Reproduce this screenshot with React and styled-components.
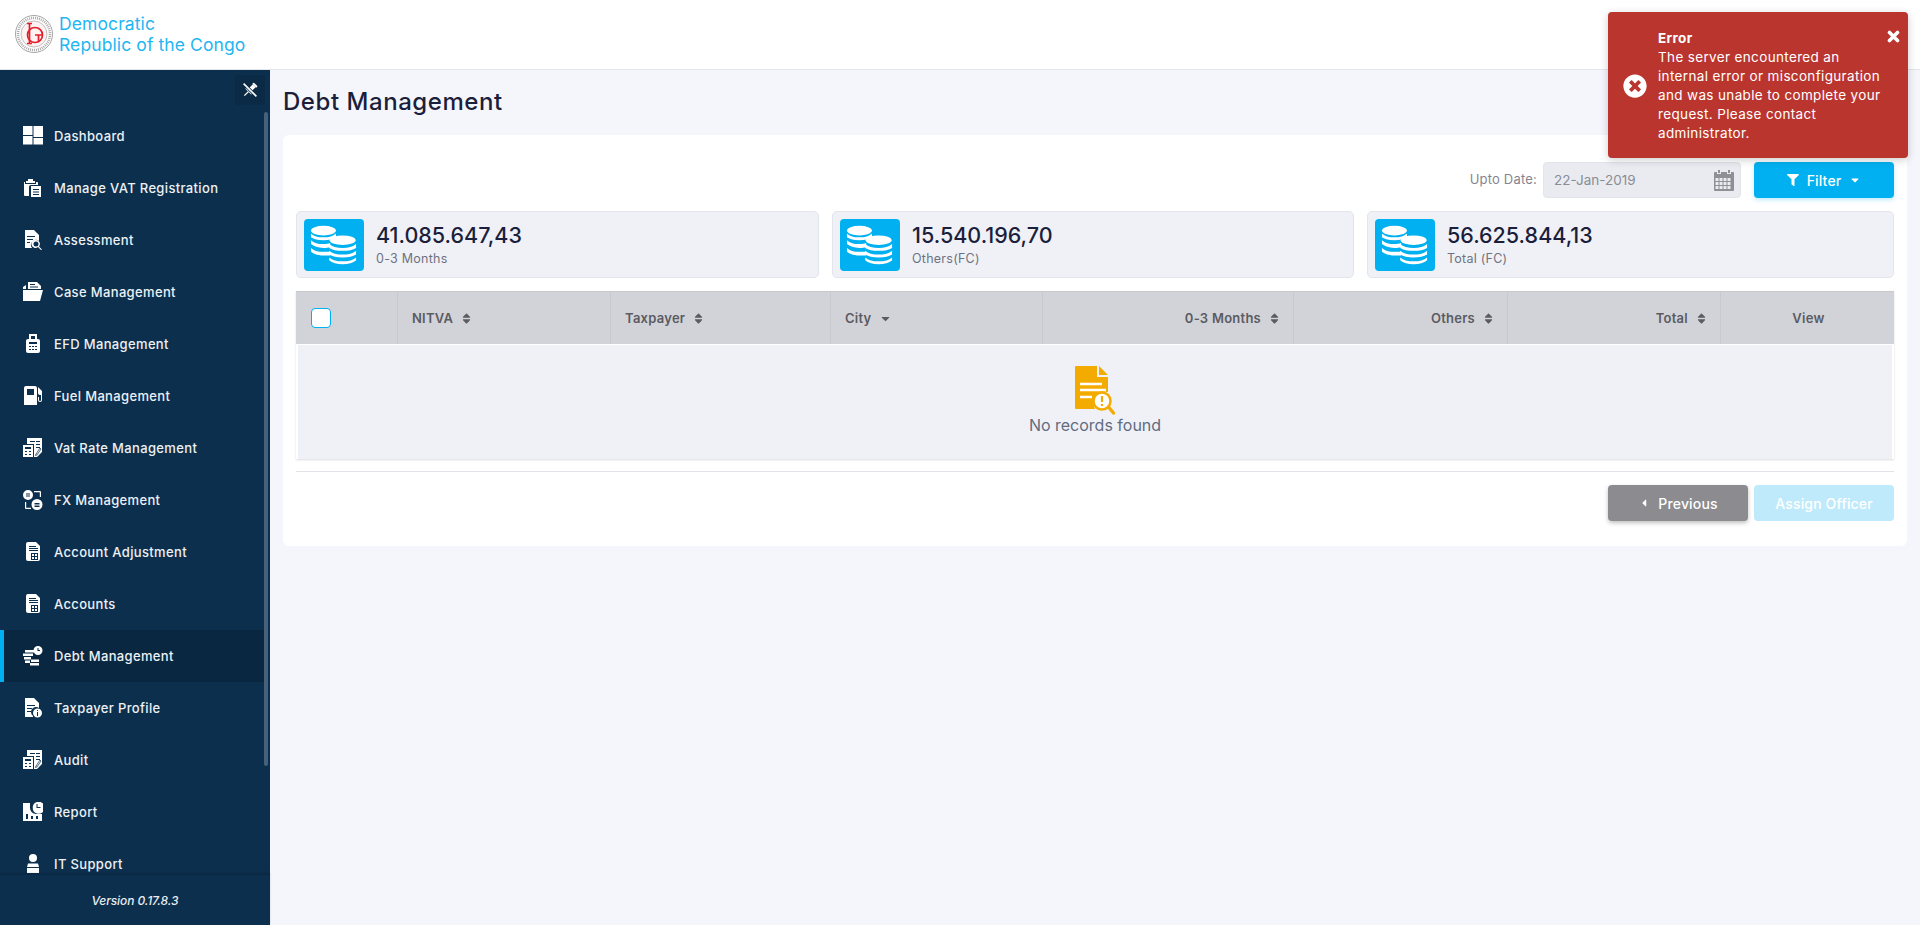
import React from 'react';
import styled, { createGlobalStyle } from 'styled-components';
import { FaFilter, FaCaretDown, FaCaretLeft, FaSort, FaTimesCircle } from 'react-icons/fa';

const GlobalStyle = createGlobalStyle`
    html, body {
        margin: 0;
        height: 100%;
        overflow: hidden;
        background: #f5f6fb;
        font-family: Inter, "Open Sans", "Liberation Sans", sans-serif;
    }
    * {
        box-sizing: border-box;
    }
`;

const Page = styled.div`
    position: relative;
    width: 1920px;
    height: 925px;
    display: flex;
    flex-direction: column;
`;

const Header = styled.header`
    height: 70px;
    flex: none;
    background: #fff;
    border-bottom: 1px solid #e4e6ec;
    display: flex;
    align-items: center;
    padding: 0 0 2px 14px;
    gap: 5px;
`;

const Brand = styled.div`
    color: #1fb6f2;
    font-size: 17.5px;
    line-height: 21px;
    letter-spacing: 0.1px;
`;

const Body = styled.div`
    flex: 1;
    display: flex;
    min-height: 0;
`;

const Sidebar = styled.aside`
    position: relative;
    width: 270px;
    flex: none;
    background: #0c2f4e;
    display: flex;
    flex-direction: column;
`;

const PinRow = styled.div`
    height: 40px;
    flex: none;
    display: flex;
    justify-content: flex-end;
    padding: 5px 5px 0 0;
`;

const PinButton = styled.div`
    width: 30px;
    height: 30px;
    background: #0a2a46;
    display: flex;
    align-items: center;
    justify-content: center;
`;

const MenuList = styled.nav`
    flex: 1;
    min-height: 0;
    overflow: hidden;
`;

const MenuItem = styled.div`
    height: 52px;
    display: flex;
    align-items: center;
    gap: 11px;
    padding-left: 23px;
    margin-right: 2px;
    color: #edf1f5;
    font-size: 13px;
    font-weight: 500;
    letter-spacing: 0.35px;
    background: ${(p) => (p.$active ? '#0a2741' : 'transparent')};
    box-shadow: ${(p) => (p.$active ? 'inset 4px 0 0 #00b0f0' : 'none')};
`;

const MenuIcon = styled.svg`
    width: 20px;
    height: 20px;
    flex: none;
    fill: #fff;
`;

const ScrollThumb = styled.div`
    position: absolute;
    top: 42px;
    right: 2px;
    width: 4px;
    height: 654px;
    border-radius: 2px;
    background: #45617b;
`;

const SideFooter = styled.div`
    height: 51px;
    flex: none;
    border-top: 1px solid #0a2843;
    box-shadow: 0 -1px 2px rgba(0, 0, 0, 0.15);
    background: #0c2f4e;
    color: #e8edf2;
    font-size: 12px;
    font-style: italic;
    font-weight: 500;
    letter-spacing: -0.1px;
    display: flex;
    align-items: center;
    justify-content: center;
    position: relative;
`;

const Main = styled.main`
    flex: 1;
    min-width: 0;
    padding: 0 13px;
`;

const Title = styled.h1`
    margin: 0;
    height: 65px;
    display: flex;
    align-items: center;
    padding-bottom: 2px;
    color: #1b1f3b;
    font-size: 24px;
    font-weight: 500;
    letter-spacing: 0.55px;
`;

const Panel = styled.section`
    background: #fff;
    border-radius: 6px;
    padding: 27px 13px 25px;
`;

const FilterRow = styled.div`
    display: flex;
    justify-content: flex-end;
    align-items: center;
    height: 36px;
`;

const DateLabel = styled.label`
    color: #85858f;
    font-size: 13px;
    letter-spacing: 0.2px;
    margin: 0 6px 3px 0;
`;

const DateInput = styled.div`
    width: 198px;
    height: 36px;
    background: #e9ebf1;
    border: 1px solid #e2e4ea;
    border-radius: 4px;
    display: flex;
    align-items: center;
    justify-content: space-between;
    padding: 0 6px 0 10px;
    color: #8a8d96;
    font-size: 13.5px;
    margin-right: 13px;
`;

const Button = styled.button`
    width: 140px;
    height: 36px;
    border: 0;
    border-radius: 4px;
    display: flex;
    align-items: center;
    justify-content: center;
    gap: 8px;
    color: #fff;
    font: 500 14px Inter, "Open Sans", sans-serif;
    letter-spacing: 0.15px;
    background: ${(p) => p.$bg};
    box-shadow: ${(p) => p.$shadow || 'none'};
`;

const Stats = styled.div`
    display: grid;
    grid-template-columns: 523px 522px 527px;
    gap: 13px;
    margin-top: 13px;
`;

const StatCard = styled.div`
    height: 67px;
    background: #f0f1f7;
    border: 1px solid #e3e5ec;
    border-radius: 5px;
    display: flex;
    align-items: center;
    gap: 12px;
    padding-left: 7px;
`;

const StatIcon = styled.div`
    width: 60px;
    height: 52px;
    border-radius: 4px;
    background: #00b0f0;
    display: flex;
    align-items: center;
    justify-content: center;
    flex: none;
`;

const StatValue = styled.div`
    color: #1b1f3b;
    font-size: 21.5px;
    line-height: 26px;
    font-weight: 500;
`;

const StatLabel = styled.div`
    margin-top: 3px;
    color: #6e7280;
    font-size: 12.5px;
    line-height: 16px;
    letter-spacing: 0.25px;
`;

const Table = styled.div`
    margin-top: 13px;
    box-shadow: 0 1px 2px rgba(0, 0, 0, 0.14);
`;

const HeadRow = styled.div`
    height: 54px;
    display: grid;
    grid-template-columns: 101px 213px 220px 212px 251px 214px 213px 174px;
    background: #d2d3d8;
    border-top: 1px solid #c8c9ce;
    border-bottom: 1px solid #fff;
`;

const HeadCell = styled.div`
    display: flex;
    align-items: center;
    justify-content: ${(p) => p.$justify || 'flex-start'};
    gap: 7px;
    padding: 0 12px 0 14px;
    color: #5b5b63;
    font-size: 13px;
    font-weight: 600;
    letter-spacing: 0.25px;
    border-left: ${(p) => (p.$first ? '0' : '1px solid #c8c9ce')};
    svg {
        font-size: 13px;
        flex: none;
    }
`;

const CheckBox = styled.span`
    width: 20px;
    height: 20px;
    background: #fff;
    border: 1px solid #00b0f0;
    border-radius: 4px;
    margin-left: 1px;
`;

const EmptyBody = styled.div`
    height: 114px;
    background: #f0f1f7;
    border-left: 2px solid #fff;
    border-right: 2px solid #fff;
    display: flex;
    flex-direction: column;
    align-items: center;
    padding-top: 21px;
    color: #5f6c80;
    font-size: 16px;
`;

const Divider = styled.hr`
    margin: 12px 0 13px;
    border: 0;
    border-top: 1px solid #e2e3ea;
`;

const Actions = styled.div`
    display: flex;
    justify-content: flex-end;
    gap: 6px;
`;

const Toast = styled.div`
    position: absolute;
    top: 12px;
    left: 1608px;
    width: 300px;
    height: 146px;
    background: #bb352f;
    border-radius: 4px;
    box-shadow: 0 2px 8px rgba(0, 0, 0, 0.2);
    color: #fff;
    display: flex;
    align-items: center;
    padding: 1px 14px 0 15px;
    gap: 11px;
    font-size: 13.5px;
    line-height: 19px;
    letter-spacing: 0.35px;
`;

const ToastIcon = styled.div`
    font-size: 24px;
    line-height: 0;
    flex: none;
`;

const ToastTitle = styled.div`
    font-weight: 700;
`;

const ToastClose = styled.div`
    position: absolute;
    top: 18px;
    right: 8px;
    line-height: 0;
`;

const icons = {
    dashboard: (
        <>
            <rect x="0" y="0" width="9.5" height="9" />
            <rect x="10.5" y="0" width="9.5" height="11" />
            <rect x="0" y="10" width="9.5" height="8.5" />
            <rect x="10.5" y="12" width="9.5" height="6.5" />
        </>
    ),
    vat: (
        <>
            <path d="M5 1h5v2h2v2H3V3h2zM1 4h1v2h11V4h1a1 1 0 0 1 1 1v2H8a2 2 0 0 0-2 2v9H2a1 1 0 0 1-1-1z" />
            <path fillRule="evenodd" d="M8 8h10v11H8zm2 3v1h6v-1zm0 2.500v1h6v-1zm0 2.500v1h6v-1z" />
        </>
    ),
    search: (
        <>
            <path d="M2 0h9l5 5v6a5 5 0 0 0-7 7H2zM4 6v1h8V6zm0 3v1h6V9zm0 3v1h3v-1z" />
            <path fillRule="evenodd" d="M13 10a4 4 0 0 1 3 6.500l3 3-1 .5-3-3A4 4 0 1 1 13 10zm0 1.500a2.500 2.500 0 1 0 0 5 2.500 2.500 0 0 0 0-5z" />
        </>
    ),
    folder: (
        <path fillRule="evenodd" d="M5 0h9l4 4v3H5zm2 2v1h5V2zm0 2.500v1h8v-1zM0 5l3-2v4H0zm0 3h20l-3 11H0z" />
    ),
    efd: (
        <path fillRule="evenodd" d="M6 0h8v5h1a2 2 0 0 1 2 2v10a2 2 0 0 1-2 2H5a2 2 0 0 1-2-2V7a2 2 0 0 1 2-2h1zm2 2v3h4V2zM6 8v2h8V8zm0 4v1h2v-1zm3 0v1h2v-1zm3 0v1h2v-1zm-6 3v1h2v-1zm3 0v1h2v-1zm3 0v1h2v-1z" />
    ),
    fuel: (
        <path fillRule="evenodd" d="M3 0h9a2 2 0 0 1 2 2v17H1V2a2 2 0 0 1 2-2zm1 3v6h7V3zm11-2 4 4v9a2 2 0 0 1-4 0v-3h1v3a1 1 0 0 0 2 0V9h-1a2 2 0 0 1-2-2z" />
    ),
    rate: (
        <>
            <path fillRule="evenodd" d="M4 0h15v14l-5 5H11V6H4zm9 3v1h4V3zM7 3v1h5V3zm6 3v1h4V6zm0 3v1h4V9z" />
            <path d="M13 16l4-6 1 1-4 6-1.500.5z" stroke="#0c2f4e" strokeWidth="0.7" />
            <path fillRule="evenodd" d="M0 7h10v12H0zm2 2v2h6V9zm0 4v1h2v-1zm4 0v1h2v-1zm-4 3v1h2v-1zm4 0v1h2v-1z" />
        </>
    ),
    fx: (
        <>
            <path fillRule="evenodd" d="M5 0a5 5 0 1 1 0 10A5 5 0 0 1 5 0zM3 3.500v1h4v-1zm0 2v1h4v-1z" />
            <path fillRule="evenodd" d="M14 9a5.500 5.500 0 1 1 0 11 5.500 5.500 0 0 1 0-11zm-2.500 4v1.500h5V13zm0 2.500V17h5v-1.500zM11 1h6a1 1 0 0 1 1 1v5h-1.200V2.200H11zM2 12h1.200v5.800H8V19H3a1 1 0 0 1-1-1z" />
        </>
    ),
    account: (
        <path fillRule="evenodd" d="M5 0h8l4 4v13a2 2 0 0 1-2 2H5a2 2 0 0 1-2-2V2a2 2 0 0 1 2-2zm1 4v1h7V4zm0 2v1h9V6zm0 2v1h9V8zm2 3v7h7v-7zm1 1h2v2H9zm3 0h2v2h-2zm-3 3h2v2H9zm3 0h2v2h-2z" />
    ),
    debt: (
        <>
            <path d="M2 4h9v2.500H2zM0 7.500h10V10H0zM1 11h7v2.500H1zM2 14.500h5V17H2zM8 13.500h8V16H8zM7 17h9v2.500H7z" />
            <path fillRule="evenodd" d="M15 0a4.500 4.500 0 1 1 0 9 4.500 4.500 0 0 1 0-9zm-.5 2v3h2.500V4h-1.500V2z" />
        </>
    ),
    profile: (
        <>
            <path d="M2 0h9l5 5v5a5 5 0 0 0-6 8v1H2zM4 7v1h8V7zm0 3v1h5v-1zm0 3v1h4v-1z" />
            <path fillRule="evenodd" d="M14.500 10.500a4.500 4.500 0 1 1 0 9 4.500 4.500 0 0 1 0-9zM14 12v1h1v-1zm0 2v4h1v-4z" />
        </>
    ),
    report: (
        <>
            <path fillRule="evenodd" d="M0 1h7v5a6 6 0 0 0 6 6h6v7H0zm3 11v5h2v-5zm5 2v3h2v-3zm5 0v3h2v-3z" />
            <path fillRule="evenodd" d="M14 0a6 6 0 1 1 0 11.500A6 6 0 0 1 14 0zm-.5 2v4h4V5h-3V2z" />
        </>
    ),
    support: (
        <>
            <circle cx="10" cy="4" r="4" />
            <path d="M5 9.500h10l1 3.500H4zM4 14h12v5H4z" />
        </>
    ),
};

const MENU = [
    ['Dashboard', 'dashboard'],
    ['Manage VAT Registration', 'vat'],
    ['Assessment', 'search'],
    ['Case Management', 'folder'],
    ['EFD Management', 'efd'],
    ['Fuel Management', 'fuel'],
    ['Vat Rate Management', 'rate'],
    ['FX Management', 'fx'],
    ['Account Adjustment', 'account'],
    ['Accounts', 'account'],
    ['Debt Management', 'debt'],
    ['Taxpayer Profile', 'profile'],
    ['Audit', 'rate'],
    ['Report', 'report'],
    ['IT Support', 'support'],
];

const STATS = [
    ['41.085.647,43', '0-3 Months'],
    ['15.540.196,70', 'Others(FC)'],
    ['56.625.844,13', 'Total (FC)'],
];

const Logo = () => (
    <svg width="40" height="40" viewBox="0 0 40 40">
        <circle cx="20" cy="20" r="18.500" fill="#fff" stroke="#8f8f8f" strokeWidth="0.8" />
        <circle cx="20" cy="20" r="16" fill="none" stroke="#a8a8a8" strokeWidth="2.500" strokeDasharray="1 1" />
        <circle cx="20" cy="20" r="13" fill="#fdf3f3" stroke="#9d9494" strokeWidth="0.6" />
        <circle cx="21" cy="21" r="7.500" fill="none" stroke="#e2202c" strokeWidth="1.700" />
        <path d="M15.500 9v21M13 9.500h5M13 29.500h5M21 21h7.500M24.500 21v7" fill="none" stroke="#e2202c" strokeWidth="1.700" />
    </svg>
);

const PinOff = () => (
    <svg width="16" height="16" viewBox="0 0 20 20" fill="#fff">
        <g transform="rotate(45 10 10)">
            <rect x="6.500" y="0" width="7" height="2.500" rx="1" />
            <rect x="7.500" y="2.500" width="5" height="6" />
            <path d="M4.500 13l3-4.500h5l3 4.500z" />
            <rect x="9.200" y="13" width="1.600" height="7" />
        </g>
        <path d="M2 2l16 16" stroke="#0a2a46" strokeWidth="4" />
        <path d="M2 2l16 16" stroke="#fff" strokeWidth="2" />
    </svg>
);

const CloseX = () => (
    <svg width="13" height="13" viewBox="0 0 13 13">
        <path d="M2.500 2.500l8 8M10.500 2.500l-8 8" stroke="#fff" strokeWidth="3.600" strokeLinecap="round" />
    </svg>
);

const Coins = () => (
    <svg width="48" height="42" viewBox="0 0 50 42" fill="#fff">
        <ellipse cx="14" cy="6" rx="13" ry="5" />
        <path d="M1 9c3 3 7 4 13 4s10-1 13-4v4c-3 2-7 3-13 3S4 15 1 13z" />
        <path d="M1 16c3 3 7 4 13 4 3 0 5 0 7-1v4c-2 1-4 1-7 1-6 0-10-2-13-4z" />
        <path d="M1 24c3 3 7 4 13 4h7v4h-7c-6 0-10-2-13-4z" />
        <ellipse cx="34" cy="16" rx="13.500" ry="5" />
        <path d="M20 20c3 3 8 4 14 4s11-1 14-4v4c-3 2-8 3-14 3s-11-1-14-3z" />
        <path d="M20 27c3 3 8 4 14 4s11-1 14-4v4c-3 2-8 3-14 3s-11-1-14-3z" />
        <path d="M20 34c3 3 8 4 14 4s11-1 14-4v3c-3 3-8 4-14 4s-11-1-14-4z" />
    </svg>
);

const CalendarIcon = () => (
    <svg width="20" height="21" viewBox="0 0 20 21" fill="#8f8f96">
        <path
            fillRule="evenodd"
            d="M4 0h2v3H4zM14 0h2v3h-2zM1 2h2v2h4V2h6v2h4V2h2a1 1 0 0 1 1 1v17a1 1 0 0 1-1 1H1a1 1 0 0 1-1-1V3a1 1 0 0 1 1-1zm.5 6v3h3V8zm4 0v3h3V8zm4 0v3h3V8zm4 0v3h3V8zm-12 4v3h3v-3zm4 0v3h3v-3zm4 0v3h3v-3zm4 0v3h3v-3zm-12 4v3h3v-3zm4 0v3h3v-3zm4 0v3h3v-3zm4 0v3h3v-3z"
        />
    </svg>
);

const NoRecordsIcon = () => (
    <svg width="40" height="49" viewBox="0 0 40 49">
        <path d="M1 0h21v11h11v15a12 12 0 0 0-13 17H1a1 1 0 0 1-1-1V1a1 1 0 0 1 1-1z" fill="#f4ab00" />
        <path d="M24 0l9 9h-9z" fill="#f4ab00" />
        <path d="M5 18h22M5 24h26M5 31h12" stroke="#fff" strokeWidth="2.500" fill="none" />
        <circle cx="27" cy="35" r="8.500" fill="#fff" stroke="#f4ab00" strokeWidth="2.500" />
        <path d="M33.500 41l5 6" stroke="#f4ab00" strokeWidth="3.500" strokeLinecap="round" />
        <path d="M27 30v6" stroke="#f4ab00" strokeWidth="2.200" />
        <circle cx="27" cy="39" r="1.200" fill="#f4ab00" />
    </svg>
);

const App = () => (
    <Page>
        <GlobalStyle />
        <Header>
            <Logo />
            <Brand>
                Democratic
                <br />
                Republic of the Congo
            </Brand>
        </Header>
        <Body>
            <Sidebar>
                <PinRow>
                    <PinButton>
                        <PinOff />
                    </PinButton>
                </PinRow>
                <MenuList>
                    {MENU.map(([label, icon]) => (
                        <MenuItem key={label} $active={label === 'Debt Management'}>
                            <MenuIcon viewBox="0 0 20 20">{icons[icon]}</MenuIcon>
                            {label}
                        </MenuItem>
                    ))}
                </MenuList>
                <ScrollThumb />
                <SideFooter>Version 0.17.8.3</SideFooter>
            </Sidebar>
            <Main>
                <Title>Debt Management</Title>
                <Panel>
                    <FilterRow>
                        <DateLabel>Upto Date:</DateLabel>
                        <DateInput>
                            22-Jan-2019
                            <CalendarIcon />
                        </DateInput>
                        <Button $bg="#00b0f0" $shadow="0 2px 4px rgba(0, 176, 240, 0.25)">
                            <FaFilter size={12} />
                            Filter
                            <FaCaretDown size={12} />
                        </Button>
                    </FilterRow>
                    <Stats>
                        {STATS.map(([value, label]) => (
                            <StatCard key={label}>
                                <StatIcon>
                                    <Coins />
                                </StatIcon>
                                <div>
                                    <StatValue>{value}</StatValue>
                                    <StatLabel>{label}</StatLabel>
                                </div>
                            </StatCard>
                        ))}
                    </Stats>
                    <Table>
                        <HeadRow>
                            <HeadCell $first>
                                <CheckBox />
                            </HeadCell>
                            <HeadCell>NITVA <FaSort /></HeadCell>
                            <HeadCell>Taxpayer <FaSort /></HeadCell>
                            <HeadCell>City <FaCaretDown /></HeadCell>
                            <HeadCell $justify="flex-end">0-3 Months <FaSort /></HeadCell>
                            <HeadCell $justify="flex-end">Others <FaSort /></HeadCell>
                            <HeadCell $justify="flex-end">Total <FaSort /></HeadCell>
                            <HeadCell $justify="center">View</HeadCell>
                        </HeadRow>
                        <EmptyBody>
                            <NoRecordsIcon />
                            No records found
                        </EmptyBody>
                    </Table>
                    <Divider />
                    <Actions>
                        <Button $bg="#8b8b90" $shadow="0 2px 4px rgba(0, 0, 0, 0.25)">
                            <FaCaretLeft size={12} />
                            Previous
                        </Button>
                        <Button $bg="#bfeafb">Assign Officer</Button>
                    </Actions>
                </Panel>
            </Main>
        </Body>
        <Toast>
            <ToastIcon>
                <FaTimesCircle />
            </ToastIcon>
            <div>
                <ToastTitle>Error</ToastTitle>
                The server encountered an internal error or misconfiguration and was unable to complete your request. Please contact administrator.
            </div>
            <ToastClose>
                <CloseX />
            </ToastClose>
        </Toast>
    </Page>
);

export default App;
